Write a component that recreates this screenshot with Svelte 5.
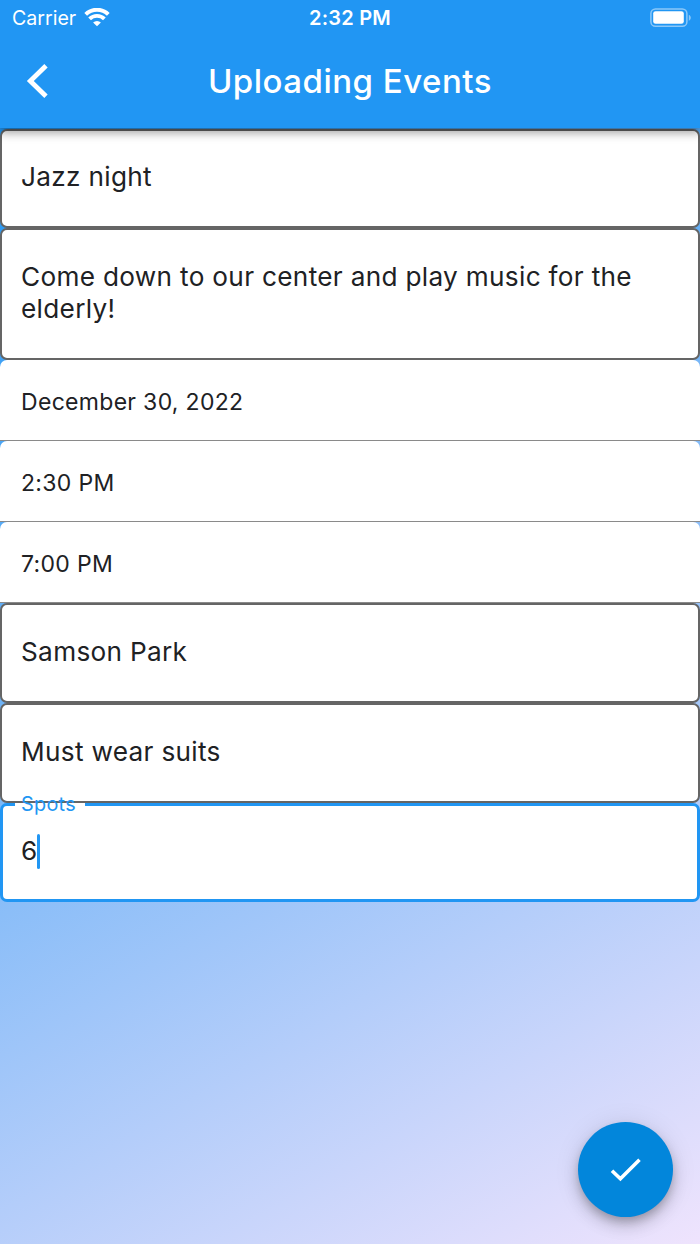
<script lang="ts">
	type Field = { value: string; kind: 'text' | 'tall' | 'picker' };

	/** 入力済みのイベント項目 */
	const fields: Field[] = [
		{ value: 'Jazz night', kind: 'text' },
		{ value: 'Come down to our center and play music for the elderly!', kind: 'tall' },
		{ value: 'December 30, 2022', kind: 'picker' },
		{ value: '2:30 PM', kind: 'picker' },
		{ value: '7:00 PM', kind: 'picker' },
		{ value: 'Samson Park', kind: 'text' },
		{ value: 'Must wear suits', kind: 'text' }
	];

	let spots = '6';
</script>

<div class="screen">
	<header class="top">
		<div class="status">
			<div class="carrier">
				<span>Carrier</span>
				<svg width="26" height="20" viewBox="0 0 26 20" aria-hidden="true">
					<path d="M1.7 6.3a16.2 16.2 0 0 1 22.6 0" />
					<path d="M5.6 10.9a10.6 10.6 0 0 1 14.8 0" />
					<path class="dot" d="M9.1 14.5a5.5 5.5 0 0 1 7.8 0L13 18.3z" />
				</svg>
			</div>
			<div class="clock">2:32 PM</div>
			<svg class="battery" width="42" height="20" viewBox="0 0 42 20" aria-hidden="true">
				<rect class="case" x="0.9" y="0.9" width="36" height="17.4" rx="4.6" />
				<rect class="charge" x="3.2" y="3.2" width="30.6" height="12.6" rx="2.4" />
				<path class="tip" d="M38.8 6.8v6c1.2-.5 2-1.6 2-3s-.8-2.5-2-3z" />
			</svg>
		</div>
		<div class="bar">
			<button class="back" aria-label="Back">
				<svg width="24" height="36" viewBox="0 0 24 36">
					<path d="M20 2.8L4.3 18L20 33.2" />
				</svg>
			</button>
			<h1>Uploading Events</h1>
		</div>
	</header>

	<main>
		{#each fields as field}
			<div class="field {field.kind}"><span>{field.value}</span></div>
		{/each}
		<div class="field text focused">
			<span class="label">Spots</span>
			<span>{spots}</span><i class="caret"></i>
		</div>
	</main>

	<button class="fab" aria-label="Save">
		<svg width="32" height="26" viewBox="0 0 32 26">
			<path d="M2 13.7L10.4 21.8L29.5 2.8" />
		</svg>
	</button>
</div>

<style>
	:global(body) {
		overflow: hidden;
	}

	.screen {
		position: relative;
		display: flex;
		flex-direction: column;
		box-sizing: border-box;
		width: 700px;
		height: 1244px;
		overflow: hidden;
		font-family: Inter, 'Liberation Sans', sans-serif;
		color: #202124;
	}

	/* status bar + app bar */
	.top {
		position: relative;
		z-index: 1;
		flex: none;
		height: 128px;
		color: #fff;
		background: #2196f3;
		box-shadow: 0 5px 9px rgba(0, 0, 0, 0.36);
	}
	.status {
		display: grid;
		grid-template-columns: 1fr auto 1fr;
		align-items: center;
		height: 36px;
		padding: 0 8px 0 12px;
		font-size: 20px;
	}
	.carrier {
		display: flex;
		align-items: center;
		gap: 8px;
		font-size: 19.6px;
	}
	.carrier svg {
		fill: none;
		stroke: #fff;
		stroke-width: 3.9;
	}
	.carrier .dot {
		fill: #fff;
		stroke: none;
	}
	.clock {
		margin-left: -4px;
		font-weight: 600;
		letter-spacing: 0.2px;
	}
	.battery {
		justify-self: end;
	}
	.case {
		fill: none;
		stroke: #8bc8f9;
		stroke-width: 1.5;
	}
	.charge {
		fill: #fff;
	}
	.tip {
		fill: #8bc8f9;
	}

	.bar {
		display: grid;
		grid-template-columns: 75px 1fr 75px;
		align-items: center;
		height: 90px;
	}
	.back {
		display: flex;
		justify-content: center;
		padding: 0;
		border: 0;
		background: none;
	}
	.back path,
	.fab path {
		fill: none;
		stroke: #fff;
		stroke-width: 4.8;
	}
	h1 {
		margin: 0;
		font-size: 33px;
		font-weight: 500;
		line-height: 40px;
		text-align: center;
		letter-spacing: 0.5px;
	}

	/* form */
	main {
		position: relative;
		z-index: 0;
		flex: 1;
		padding-top: 0.5px;
		background: linear-gradient(149.5deg, #2196f3, #f3e5fd 102%);
	}
	.field {
		box-sizing: border-box;
		display: flex;
		align-items: center;
		height: 99.7px;
		padding: 0 21px 2px 19px;
		border: 2px solid #656565;
		border-radius: 7px;
		background: #fff;
		font-size: 26.2px;
		line-height: 32px;
		letter-spacing: 0.31px;
	}
	.field.tall {
		height: 131.5px;
		padding-right: 50px;
	}
	.field.picker {
		height: 81.2px;
		padding: 4px 21px 0;
		border-width: 0 0 1.5px;
		border-color: #8a8a8a;
		border-radius: 7px 7px 0 0;
		font-size: 23px;
	}
	.field.focused {
		position: relative;
		border: 3.4px solid #2196f3;
		padding-left: 18px;
	}

	/* ラベル部分だけ枠線を切り欠く */
	.label {
		position: absolute;
		z-index: 0;
		top: -14px;
		left: 12px;
		padding: 0 9px 0 6px;
		color: #2196f3;
		font-size: 19.8px;
		line-height: 24px;
	}
	.label::before {
		content: '';
		position: absolute;
		z-index: -1;
		inset: 11px 0 9px;
		background: #fff;
	}
	.caret {
		width: 3px;
		height: 35px;
		margin-left: -1px;
		border-radius: 2px;
		background: #2196f3;
	}

	.fab {
		position: absolute;
		z-index: 1;
		right: 27px;
		bottom: 27px;
		display: flex;
		align-items: center;
		justify-content: center;
		width: 95px;
		height: 95px;
		padding: 0;
		border: 0;
		border-radius: 50%;
		background: #0286db;
		box-shadow:
			0 5px 8px -1px rgba(0, 0, 0, 0.2),
			0 9px 16px rgba(0, 0, 0, 0.14),
			0 2px 26px rgba(0, 0, 0, 0.1);
	}
	.fab path {
		stroke-width: 3.6;
	}
</style>
